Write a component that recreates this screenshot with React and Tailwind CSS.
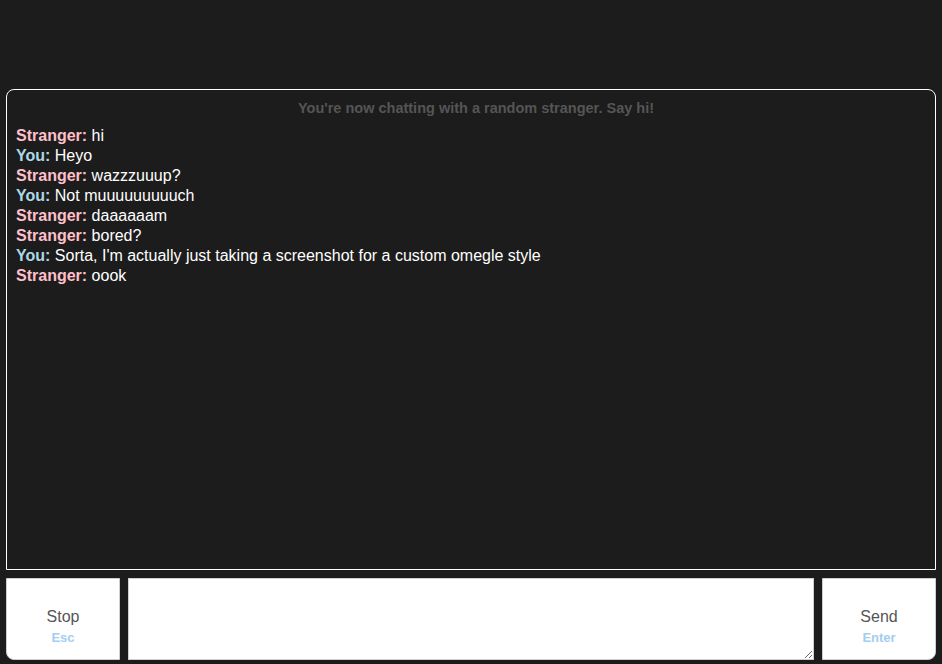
const messages = [
  { from: 'Stranger', text: 'hi' },
  { from: 'You', text: 'Heyo' },
  { from: 'Stranger', text: 'wazzzuuup?' },
  { from: 'You', text: 'Not muuuuuuuuuch' },
  { from: 'Stranger', text: 'daaaaaam' },
  { from: 'Stranger', text: 'bored?' },
  { from: 'You', text: "Sorta, I'm actually just taking a screenshot for a custom omegle style" },
  { from: 'Stranger', text: 'oook' },
];

const ChatButton = ({ label, hint, className }) => (
  <button
    type="button"
    className={`w-[114px] shrink-0 flex flex-col items-center justify-start pt-[28px] bg-white border border-[#cfcfcf] ${className}`}
  >
    <span className="text-[16px] leading-[20px] text-[#555]">{label}</span>
    <span className="text-[13px] leading-[16px] font-bold text-[#a3cdf1] mt-[3px]">{hint}</span>
  </button>
);

const App = () => {
  return (
    <div
      className="h-[664px] bg-[#1c1c1c] flex flex-col px-[6px] pt-[89px] pb-[4px]"
      style={{ fontFamily: '"Liberation Sans", Arial, sans-serif' }}
    >
      <div className="flex-1 border border-white rounded-t-[8px] px-[9px] pt-[10px]">
        <p className="text-center pl-[10px] text-[14.5px] leading-[17px] font-bold text-[#555]">
          You're now chatting with a random stranger. Say hi!
        </p>
        <div className="mt-[9px]">
          {messages.map((m, i) => (
            <div key={i} className="text-[16px] leading-[20px] text-white">
              <span
                className={`font-bold ${m.from === 'You' ? 'text-[#add8e6]' : 'text-[#ffc0cb]'}`}
              >
                {m.from}:
              </span>{' '}
              {m.text}
            </div>
          ))}
        </div>
      </div>

      <div className="h-[82px] mt-[8px] flex gap-[8px]">
        <ChatButton label="Stop" hint="Esc" className="rounded-bl-[8px]" />
        <textarea className="flex-1 bg-white border border-[#cfcfcf] outline-none" />
        <ChatButton label="Send" hint="Enter" className="rounded-br-[8px]" />
      </div>
    </div>
  );
};

export default App;
